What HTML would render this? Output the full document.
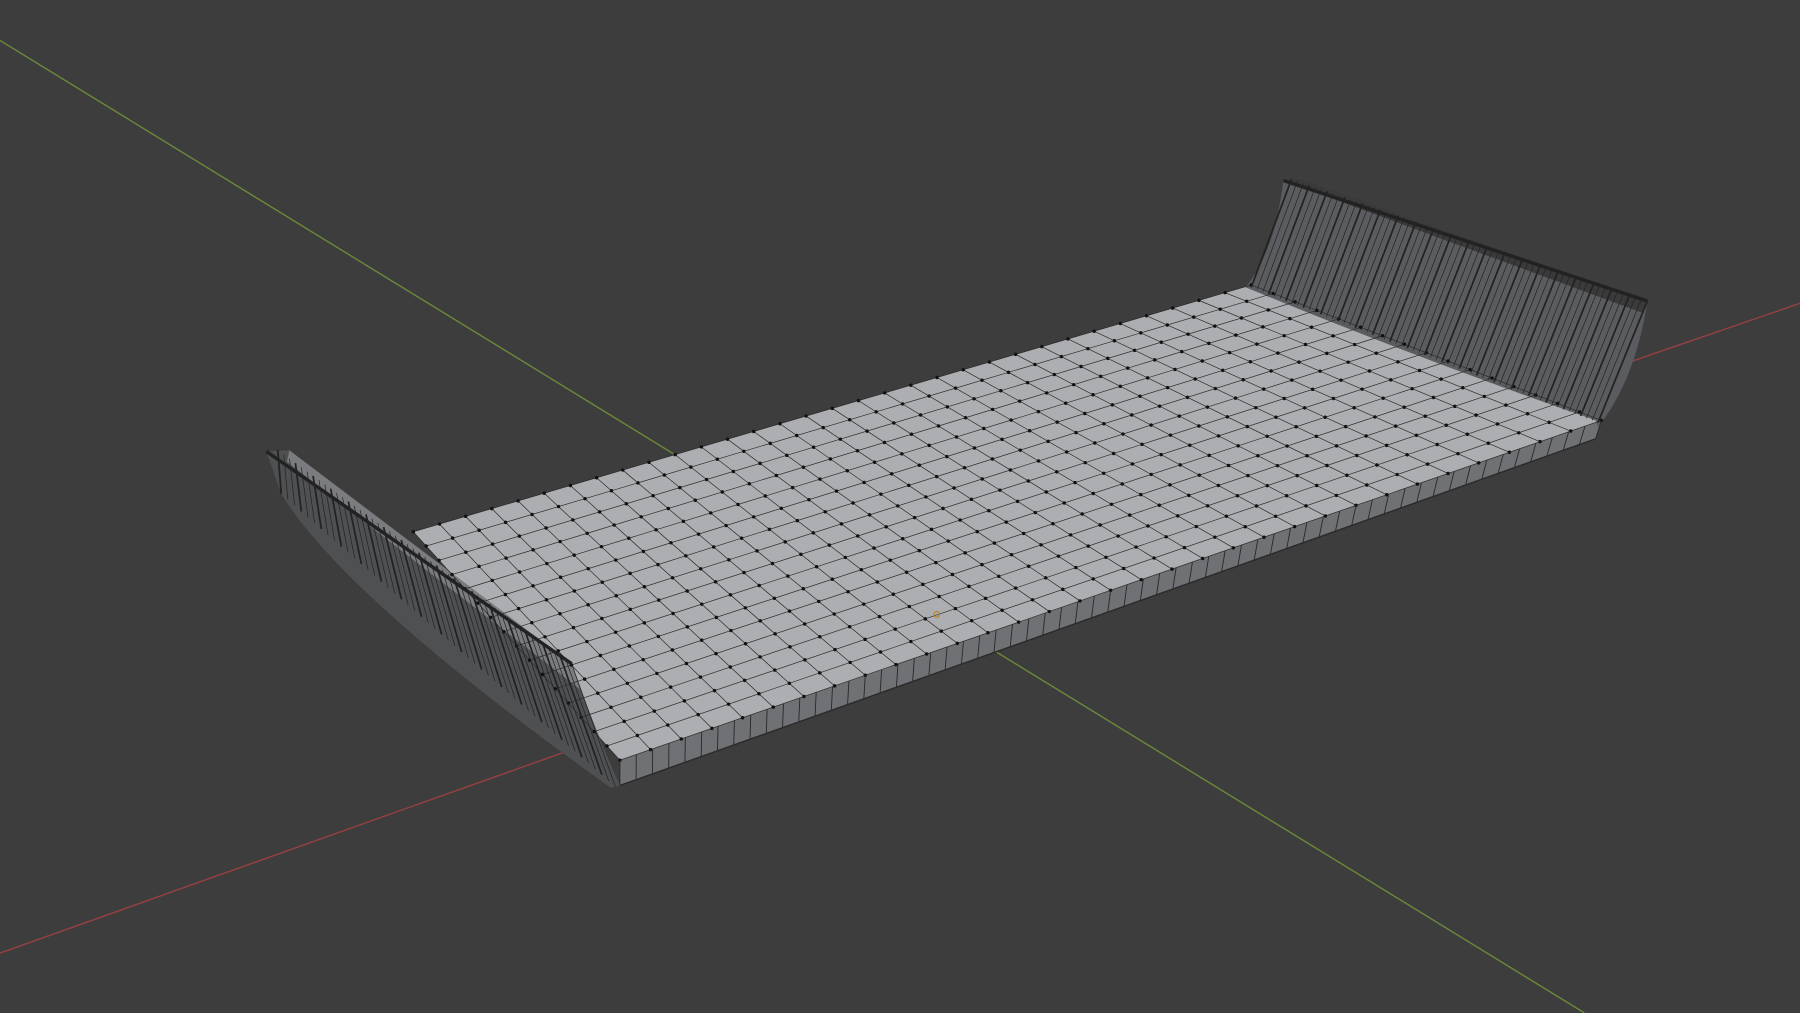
<!DOCTYPE html>
<html><head><meta charset="utf-8"><style>
html,body{margin:0;padding:0;background:#3d3d3d;width:1800px;height:1013px;overflow:hidden}
svg{display:block}
</style></head><body>
<svg id="s" width="1800" height="1013" viewBox="0 0 1568 882" xmlns="http://www.w3.org/2000/svg">
<rect width="1568" height="882" fill="#3d3d3d"/>
<line x1="0" y1="35" x2="1380" y2="882" stroke="#6b8a3a" stroke-width="1.2"/>
<line x1="0" y1="830" x2="500" y2="652" stroke="#9a4040" stroke-width="1.2"/>
<line x1="1420" y1="315" x2="1568" y2="264" stroke="#9a4040" stroke-width="1.2"/>
<polygon points="540,662 1395,366 1390,382 540,684" fill="#6f7174"/>
<polygon points="360,463 1090,248 1395,366 540,662" fill="#acaeb1"/>
<path d="M232,393 L252,392 L498,578 Q520,640 540,684 L532,686 Q300,520 245,430 Z" fill="#4e5052"/>
<path d="M252,392 L498,578 L505,600 L250,402 Z" fill="#7a7c7f"/>
<path d="M1118,157 L1132,155 L1435,262 Q1425,330 1392,372 L1390,366 Q1230,310 1085,250 Q1110,220 1118,157 Z" fill="#5a5c5f"/>
<path d="M1118,157 L1132,155 L1435,262 L1430,272 Z" fill="#3a3a3a"/>
<g id="g" stroke="#2a2a2a" fill="none"></g>
<circle cx="816" cy="535" r="2.5" fill="none" stroke="#c08020"/>
</svg>
<script>
(function(){
var g=document.getElementById('g'),NS='http://www.w3.org/2000/svg';
function L(a,b,w,c){var l=document.createElementNS(NS,'line');l.setAttribute('x1',a[0]);l.setAttribute('y1',a[1]);l.setAttribute('x2',b[0]);l.setAttribute('y2',b[1]);l.setAttribute('stroke-width',w);if(c)l.setAttribute('stroke',c);g.appendChild(l);}
function lerp(a,b,t){return[a[0]+(b[0]-a[0])*t,a[1]+(b[1]-a[1])*t];}
var A=[360,463],B=[1090,248],C=[1395,366],D=[540,662];
function P(u,v){return lerp(lerp(D,C,u),lerp(A,B,u),v);}
var NU=32,NV=16,i,j,t,p1,p2;
for(i=0;i<=NU;i++){L(P(i/NU,0),P(i/NU,1),0.6);}
for(j=0;j<=NV;j++){L(P(0,j/NV),P(1,j/NV),0.6);}
for(i=0;i<=NU;i++)for(j=0;j<=NV;j++){var p=P(i/NU,j/NV);var c=document.createElementNS(NS,'circle');c.setAttribute('cx',p[0]);c.setAttribute('cy',p[1]);c.setAttribute('r',1.5);c.setAttribute('fill','#111');c.setAttribute('stroke','none');g.appendChild(c);}
for(i=0;i<=60;i++){t=i/60;L(lerp(D,C,t),lerp([540,684],[1390,382],t),0.8);}
L([540,684],[1390,382],1.2);
for(i=0;i<=50;i++){t=i/50;p1=lerp([242,392],[498,578],t);p2=lerp([245,430],[536,685],t);L(p1,p2,i%3?0.6:1.5,'#222');}
L([232,393],[498,578],3,'#222');
for(i=0;i<=60;i++){t=i/60;p1=lerp([1125,156],[1435,262],t);p2=lerp([1090,250],[1392,368],t);L(p1,p2,i%3?0.6:1.5,'#222');}
L([1118,157],[1435,262],3,'#222');
})();
</script>
</body></html>
